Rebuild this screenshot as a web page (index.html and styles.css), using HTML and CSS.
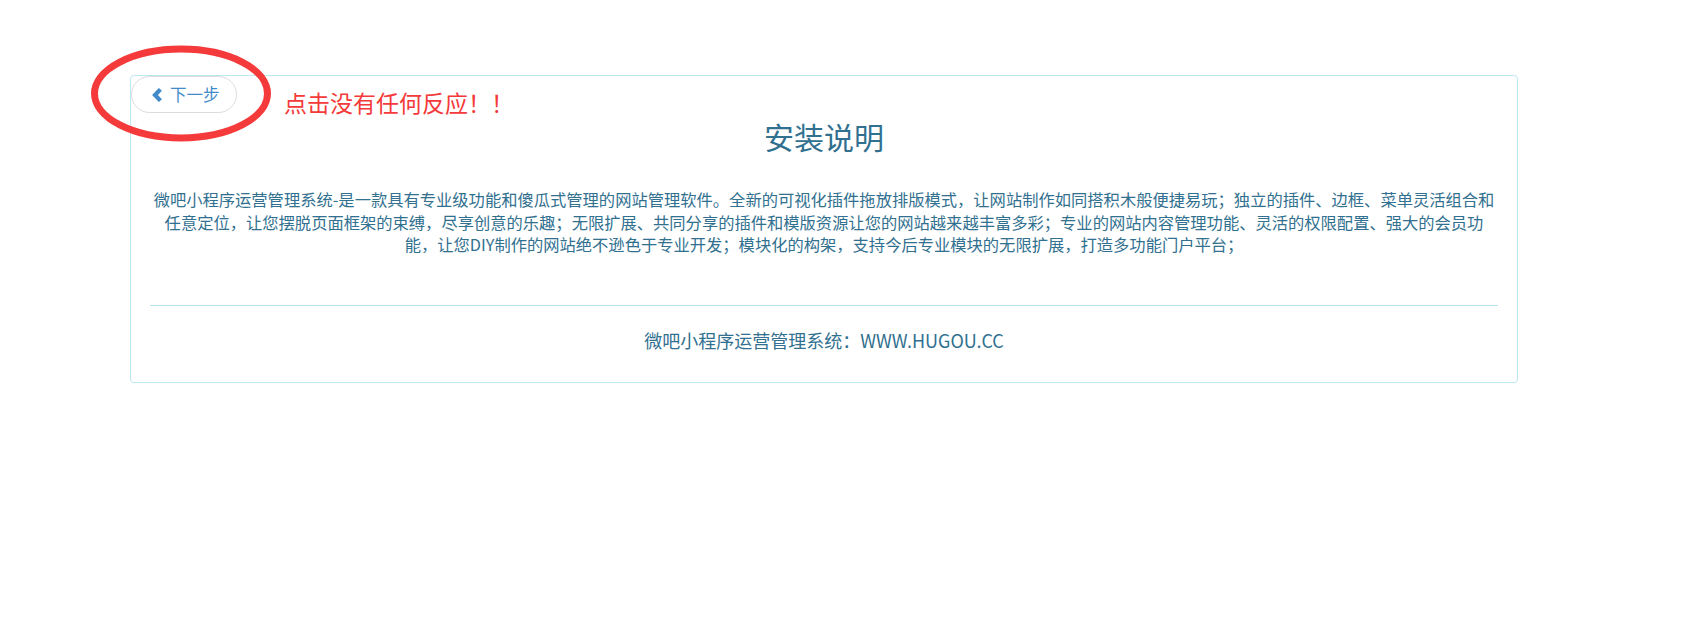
FILE: index.html
```html
<!DOCTYPE html>
<html lang="zh-CN">
<head>
<meta charset="utf-8">
<title>安装说明</title>
<link rel="stylesheet" href="styles.css">
</head>
<body>
<div class="wrap">
  <div class="panel">
    <button class="btn-next" type="button">
      <svg class="chev" width="10" height="14" viewBox="0 0 10 14"><path d="M8.4 1.4 L3 7 L8.4 12.6" fill="none" stroke="#428bca" stroke-width="4.2" stroke-linejoin="miter"/></svg>
      <span>下一步</span>
    </button>
    <svg class="mark" width="188" height="103" viewBox="0 0 188 103"><ellipse cx="94" cy="51.5" rx="86.5" ry="44.5" fill="none" stroke="#f43a3a" stroke-width="7"/></svg>
    <div class="note">点击没有任何反应！！</div>
    <h2 class="title">安装说明</h2>
    <p class="desc">微吧小程序运营管理系统-是一款具有专业级功能和傻瓜式管理的网站管理软件。全新的可视化插件拖放排版模式，让网站制作如同搭积木般便捷易玩；独立的插件、边框、菜单灵活组合和任意定位，让您摆脱页面框架的束缚，尽享创意的乐趣；无限扩展、共同分享的插件和模版资源让您的网站越来越丰富多彩；专业的网站内容管理功能、灵活的权限配置、强大的会员功能，让您DIY制作的网站绝不逊色于专业开发；模块化的构架，支持今后专业模块的无限扩展，打造多功能门户平台；</p>
    <hr class="sep">
    <h4 class="foot">微吧小程序运营管理系统：WWW.HUGOU.CC</h4>
  </div>
</div>
</body>
</html>
```

FILE: styles.css
```css
html, body {
  margin: 0;
  padding: 0;
  background: #fff;
}
body {
  font-family: "Noto Sans CJK SC", "Noto Sans", sans-serif;
  color: #31708f;
}
.wrap {
  margin: 75px 0 0 130px;
  width: 1388px;
}
.panel {
  position: relative;
  border: 1px solid #bce8f1;
  border-radius: 4px;
  padding: 0 19px 32px;
  text-align: center;
}
.btn-next {
  position: absolute;
  left: 0;
  top: 0;
  width: 106px;
  height: 37px;
  box-sizing: border-box;
  border: 1px solid #dcdcdc;
  border-radius: 19px;
  background: #fff;
  padding: 0 0 0 20px;
  display: flex;
  align-items: center;
  gap: 8px;
  color: #428bca;
  font-family: "Noto Sans CJK SC", sans-serif;
  font-size: 16.5px;
  line-height: 1;
  z-index: 1;
}
.chev {
  display: block;
}
.mark {
  position: absolute;
  left: -44px;
  top: -34px;
  z-index: 2;
}
.note {
  position: absolute;
  left: 153px;
  top: 13px;
  font-size: 23px;
  line-height: 27px;
  color: #f43a3a;
  white-space: nowrap;
}
.title {
  margin: 44px 0 0;
  font-size: 30px;
  line-height: 33px;
  font-weight: 400;
}
.desc {
  margin: 35px 0 0;
  font-size: 16.3px;
  line-height: 22.5px;
}
.sep {
  margin: 49px 0 0;
  border: 0;
  border-top: 1px solid #b4e2ea;
  height: 0;
}
.foot {
  margin: 24px 0 0;
  font-size: 18px;
  line-height: 20px;
  font-weight: 400;
}
```
